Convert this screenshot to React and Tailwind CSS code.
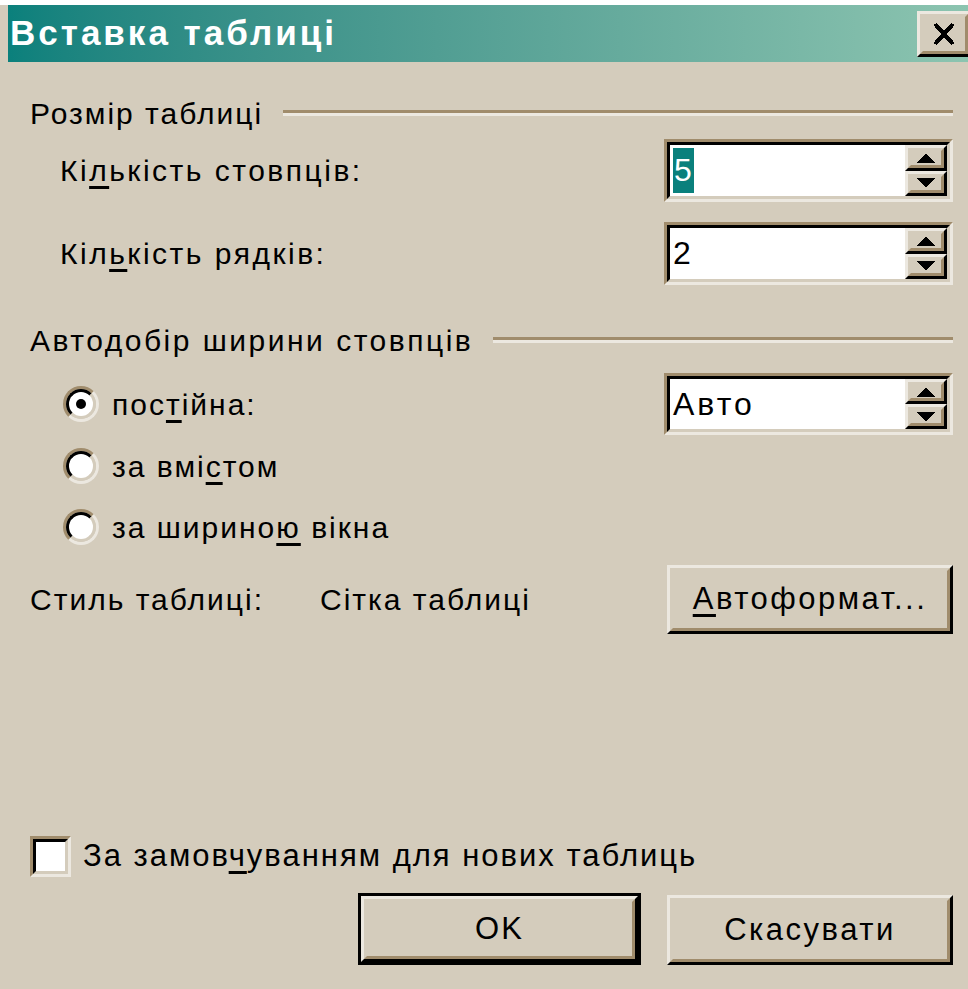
const FONT = "font-['Liberation_Sans',Arial,sans-serif]";

// classic 3D bevels
function Raised({ className = "", children, def = false }) {
  const body = (
    <div className="h-full w-full border-[3px] border-t-[#ece8e0] border-l-[#ece8e0] border-r-black border-b-black">
      <div className="flex h-full w-full items-center justify-center border-[3px] border-t-[#d4ccbc] border-l-[#d4ccbc] border-r-[#a08c6c] border-b-[#a08c6c] bg-[#d4ccbc]">
        {children}
      </div>
    </div>
  );
  if (def) {
    return <div className={`border-[3px] border-black ${className}`}>{body}</div>;
  }
  return <div className={className}>{body}</div>;
}

function Sunken({ className = "", children }) {
  return (
    <div className={`border-[3px] border-t-[#a08c6c] border-l-[#a08c6c] border-r-[#ece8e0] border-b-[#ece8e0] ${className}`}>
      <div className="flex h-full w-full border-[3px] border-t-black border-l-black border-r-[#d4ccbc] border-b-[#d4ccbc] bg-white">
        {children}
      </div>
    </div>
  );
}

function Arrow({ up }) {
  return (
    <svg width="18" height="10" viewBox="0 0 18 10" shapeRendering="crispEdges">
      {up ? <path d="M9 0 L18 10 L0 10 Z" fill="black" /> : <path d="M0 0 L18 0 L9 10 Z" fill="black" />}
    </svg>
  );
}

function SpinBox({ value, selected = false }) {
  return (
    <Sunken className="h-full w-[289px]">
      <div className="flex flex-1 items-center pl-[3px]">
        <span
          className={`text-[32px] leading-[45px] tracking-[3px] ${
            selected ? "bg-[#0a807c] pl-[1px] pr-[2px] tracking-normal text-white" : "text-black"
          }`}
        >
          {value}
        </span>
      </div>
      <div className="flex w-[42px] flex-col">
        <Raised className="flex-1">
          <Arrow up />
        </Raised>
        <Raised className="flex-1">
          <Arrow />
        </Raised>
      </div>
    </Sunken>
  );
}

function Radio({ checked }) {
  return (
    <div className="h-[36px] w-[36px] rounded-full border-[3px] border-t-[#a08c6c] border-l-[#a08c6c] border-r-[#ece8e0] border-b-[#ece8e0]">
      <div className="flex h-full w-full items-center justify-center rounded-full border-[3px] border-t-black border-l-black border-r-[#d4ccbc] border-b-[#d4ccbc] bg-white">
        {checked && <div className="h-[10px] w-[10px] rounded-full bg-black" />}
      </div>
    </div>
  );
}

function GroupTitle({ children }) {
  return (
    <div className="flex h-[40px] items-center">
      <span className="whitespace-nowrap">{children}</span>
      <div className="ml-[20px] h-[6px] flex-1 border-t-[3px] border-b-[3px] border-t-[#a08c6c] border-b-[#ece8e0]" />
    </div>
  );
}

const U = ({ children }) => (
  <span className="underline decoration-[3px] underline-offset-[5px]">{children}</span>
);

export default function App() {
  return (
    <div className={`h-[989px] w-[968px] overflow-hidden border-t-[5px] border-white bg-[#d4ccbc] text-[30px] tracking-[2px] text-black ${FONT}`}>
      {/* caption */}
      <div className="ml-[8px] flex h-[57px] items-center justify-between bg-gradient-to-r from-[#0a807c] to-[#8cc4b0] pl-[2px]">
        <span className="text-[35px] font-bold tracking-[3px] text-white">Вставка таблиці</span>
        <Raised className="h-[46px] w-[54px] -mr-[3px]">
          <svg width="22" height="24" viewBox="0 0 22 24" shapeRendering="crispEdges">
            <path d="M2 2 L20 22 M20 2 L2 22" stroke="black" strokeWidth="4" />
          </svg>
        </Raised>
      </div>

      <div className="flex flex-col pl-[30px] pr-[15px] pt-[31px]">
        <GroupTitle>Розмір таблиці</GroupTitle>

        <div className="mt-[6px] flex h-[63px] items-center justify-between">
          <span className="pl-[30px] tracking-[2.5px]">
            Кі<U>л</U>ькість стовпців:
          </span>
          <SpinBox value="5" selected />
        </div>

        <div className="mt-[20px] flex h-[63px] items-center justify-between">
          <span className="pl-[30px] tracking-[2.5px]">
            Кіл<U>ь</U>кість рядків:
          </span>
          <SpinBox value="2" />
        </div>

        <div className="mt-[35px] tracking-[2.5px]">
          <GroupTitle>Автодобір ширини стовпців</GroupTitle>
        </div>

        <div className="mt-[13px] flex h-[62px] items-center justify-between">
          <div className="flex items-center gap-[13px] pl-[33px]">
            <Radio checked />
            <span>
              пос<U>т</U>ійна:
            </span>
          </div>
          <SpinBox value="Авто" />
        </div>

        <div className="mt-[11px] flex h-[40px] items-center gap-[13px] pl-[33px]">
          <Radio />
          <span>
            за вмі<U>с</U>том
          </span>
        </div>

        <div className="mt-[21px] flex h-[40px] items-center gap-[13px] pl-[33px]">
          <Radio />
          <span>
            за ширино<U>ю</U> вікна
          </span>
        </div>

        <div className="mt-[18px] flex h-[69px] items-center">
          <span className="w-[290px]">Стиль таблиці:</span>
          <span className="flex-1">Сітка таблиці</span>
          <Raised className="h-[69px] w-[286px]">
            <span className="text-[31px] tracking-[2.5px]">
              <U>А</U>втоформат...
            </span>
          </Raised>
        </div>

        <div className="mt-[202px] flex h-[41px] items-center">
          <Sunken className="h-[41px] w-[41px]" />
          <span className="ml-[12px] text-[31px]">
            За замов<U>ч</U>уванням для нових таблиць
          </span>
        </div>

        <div className="mt-[16px] flex items-start justify-end gap-[26px]">
          <Raised def className="h-[72px] w-[283px]">
            <span className="text-[31px]">OK</span>
          </Raised>
          <Raised className="mt-[2px] h-[70px] w-[286px]">
            <span className="text-[31px] tracking-[2.5px]">Скасувати</span>
          </Raised>
        </div>
      </div>
    </div>
  );
}
